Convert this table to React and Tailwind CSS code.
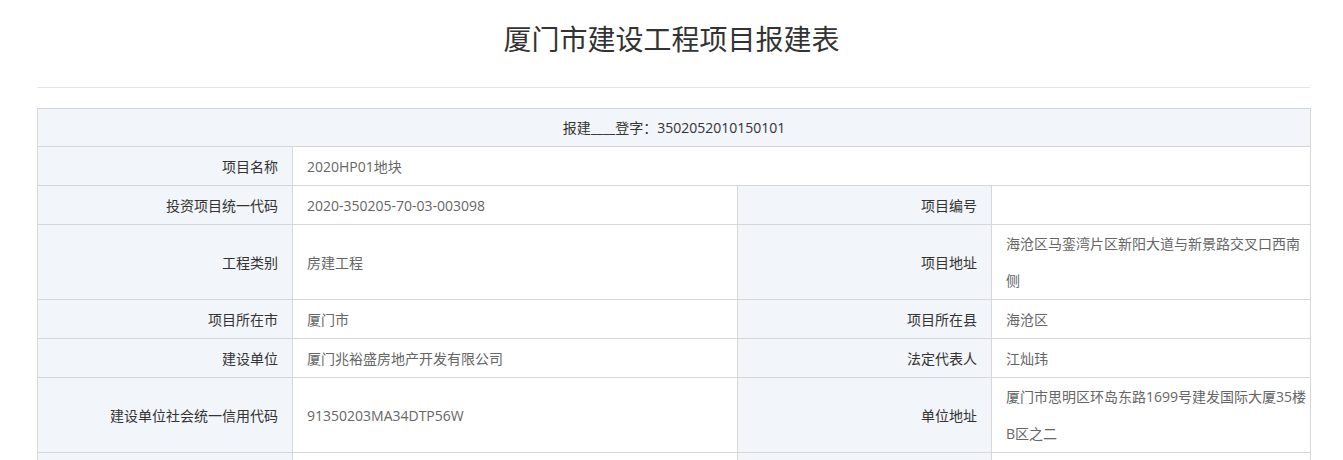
const rows = [
  { type: 'full', label: '项目名称', value: '2020HP01地块' },
  { label: '投资项目统一代码', value: '2020-350205-70-03-003098', label2: '项目编号', value2: '' },
  { label: '工程类别', value: '房建工程', label2: '项目地址', value2: ['海沧区马銮湾片区新阳大道与新景路交叉口西南', '侧'] },
  { label: '项目所在市', value: '厦门市', label2: '项目所在县', value2: '海沧区' },
  { label: '建设单位', value: '厦门兆裕盛房地产开发有限公司', label2: '法定代表人', value2: '江灿玮' },
  { label: '建设单位社会统一信用代码', value: '91350203MA34DTP56W', label2: '单位地址', value2: ['厦门市思明区环岛东路1699号建发国际大厦35楼', 'B区之二'] },
  { label: '建设单位联系人', value: '', label2: '联系电话', value2: '' },
  { label: '建设规模', value: '', label2: '总投资', value2: '' },
];

const labelCls = 'h-[39px] bg-[#f2f5fa] border border-[#d7d7d7] pr-[14px] text-right align-middle leading-[37px] text-[#333]';
const valueCls = 'h-[39px] border border-[#d7d7d7] pl-[14px] pr-0 text-left align-middle leading-[37px] text-[#666]';

function Value({ v }) {
  if (Array.isArray(v)) {
    return v.map((line, i) => (
      <div key={i} className="whitespace-nowrap">{line}</div>
    ));
  }
  return v;
}

export default function App() {
  return (
    <div
      className="w-[1343px] bg-white text-[14px]"
      style={{ fontFamily: '"Open Sans", "Noto Sans CJK SC", sans-serif' }}
    >
      <h1
        className="h-[76px] flex items-center justify-center text-[28px] font-normal text-[#333]"
        style={{ fontFamily: '"Noto Sans CJK SC", sans-serif' }}
      >
        厦门市建设工程项目报建表
      </h1>
      <div className="ml-[37px] w-[1273px] mt-[11px] border-t border-[#e6e6e6]" />
      <table className="ml-[37px] mt-[20px] w-[1273px] table-fixed border-collapse">
        <colgroup>
          <col className="w-[255px]" />
          <col className="w-[445px]" />
          <col className="w-[254px]" />
          <col className="w-[319px]" />
        </colgroup>
        <tbody>
          <tr>
            <td colSpan={4} className="h-[38px] bg-[#f2f5fa] border border-[#d7d7d7] text-center align-middle leading-[36px] text-[#333]">
              报建____登字：3502052010150101
            </td>
          </tr>
          {rows.map((r) =>
            r.type === 'full' ? (
              <tr key={r.label}>
                <td className={labelCls}>{r.label}</td>
                <td colSpan={3} className={valueCls}>{r.value}</td>
              </tr>
            ) : (
              <tr key={r.label}>
                <td className={labelCls}>{r.label}</td>
                <td className={valueCls}><Value v={r.value} /></td>
                <td className={labelCls}>{r.label2}</td>
                <td className={valueCls}><Value v={r.value2} /></td>
              </tr>
            )
          )}
        </tbody>
      </table>
    </div>
  );
}
